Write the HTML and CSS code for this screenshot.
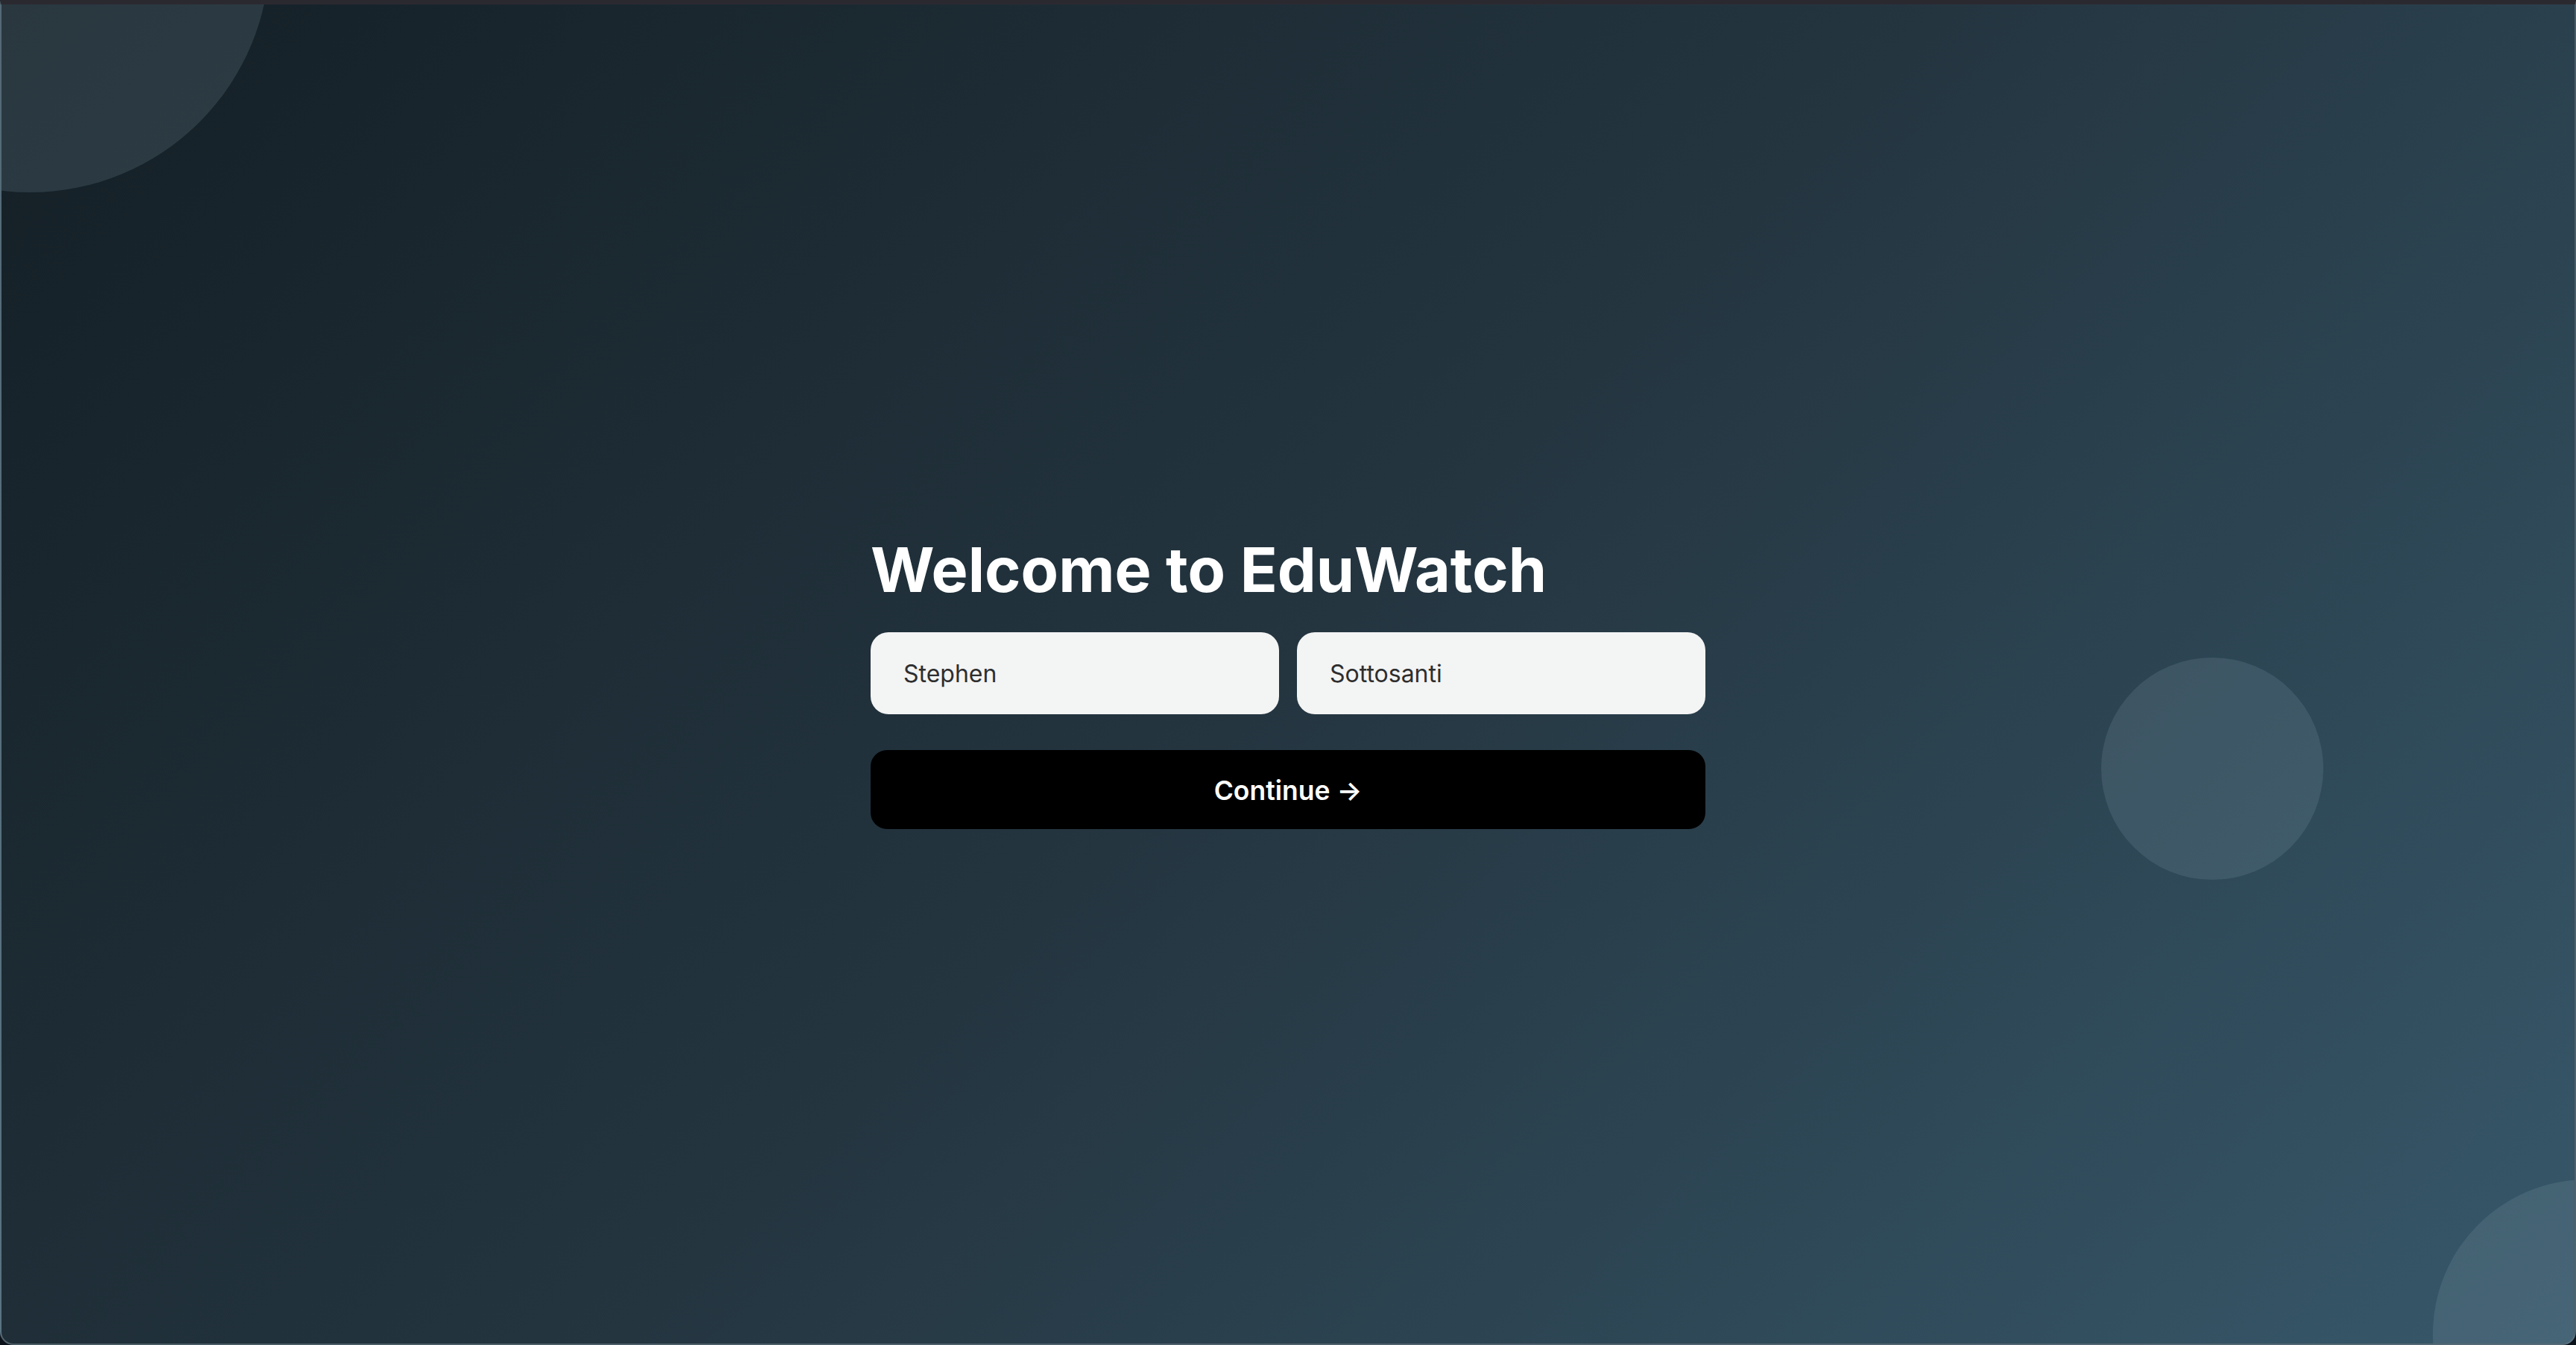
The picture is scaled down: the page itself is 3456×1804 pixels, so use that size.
FILE: index.html
```html
<!DOCTYPE html>
<html lang="en">
<head>
<meta charset="utf-8">
<title>EduWatch</title>
<link rel="stylesheet" href="styles.css">
</head>
<body>
  <div class="frame">
    <span class="blob blob-tl"></span>
    <span class="blob blob-mr"></span>
    <span class="blob blob-br"></span>
    <main class="card">
      <h1 class="title">Welcome to EduWatch</h1>
      <div class="name-row">
        <input class="field" type="text" value="Stephen" aria-label="First name">
        <input class="field" type="text" value="Sottosanti" aria-label="Last name">
      </div>
      <button class="continue" type="button">Continue →</button>
    </main>
  </div>
</body>
</html>
```
FILE: styles.css
```css
html, body {
  margin: 0;
  padding: 0;
  height: 100%;
}
body {
  background: #0c121a;
  font-family: Inter, "Noto Sans", "Liberation Sans", sans-serif;
}
.frame {
  position: relative;
  box-sizing: border-box;
  height: 100vh;
  border-top: 6px solid #2b2930;
  border-left: 2px solid rgba(120, 140, 152, 0.55);
  border-right: 2px solid rgba(120, 140, 152, 0.55);
  border-bottom: 2px solid rgba(120, 140, 152, 0.55);
  border-radius: 0 0 18px 18px;
  background: linear-gradient(135deg, #141f25 0%, #243540 50%, #37586a 100%);
  overflow: hidden;
  display: flex;
  align-items: center;
  justify-content: center;
}
.blob {
  position: absolute;
  border-radius: 50%;
  background: rgba(130, 155, 172, 0.2);
}
.blob-tl {
  width: 644px;
  height: 644px;
  left: -284px;
  top: -392px;
}
.blob-mr {
  width: 298px;
  height: 298px;
  right: 337px;
  top: 876px;
}
.blob-br {
  width: 414px;
  height: 414px;
  right: -224px;
  bottom: -194px;
}
.card {
  position: relative;
  width: 1120px;
  margin-top: 19px;
  display: flex;
  flex-direction: column;
}
.title {
  margin: 0 0 34px;
  font-size: 82.5px;
  line-height: 1.2;
  font-weight: 700;
  color: #ffffff;
  letter-spacing: 0;
}
.name-row {
  display: flex;
  gap: 24px;
}
.field {
  flex: 1;
  min-width: 0;
  height: 110px;
  box-sizing: border-box;
  padding: 0 44px;
  border: none;
  border-radius: 24px;
  background: #f3f4f4;
  color: #2e2e2e;
  font-family: Inter, "Noto Sans", "Liberation Sans", sans-serif;
  font-size: 32px;
  outline: none;
}
.continue {
  margin-top: 48px;
  height: 106px;
  border: none;
  border-radius: 22px;
  background: #000000;
  color: #ffffff;
  font-family: Inter, "Noto Sans", "Liberation Sans", sans-serif;
  font-size: 35.5px;
  font-weight: 600;
  padding-top: 3px;
  cursor: pointer;
}
```
